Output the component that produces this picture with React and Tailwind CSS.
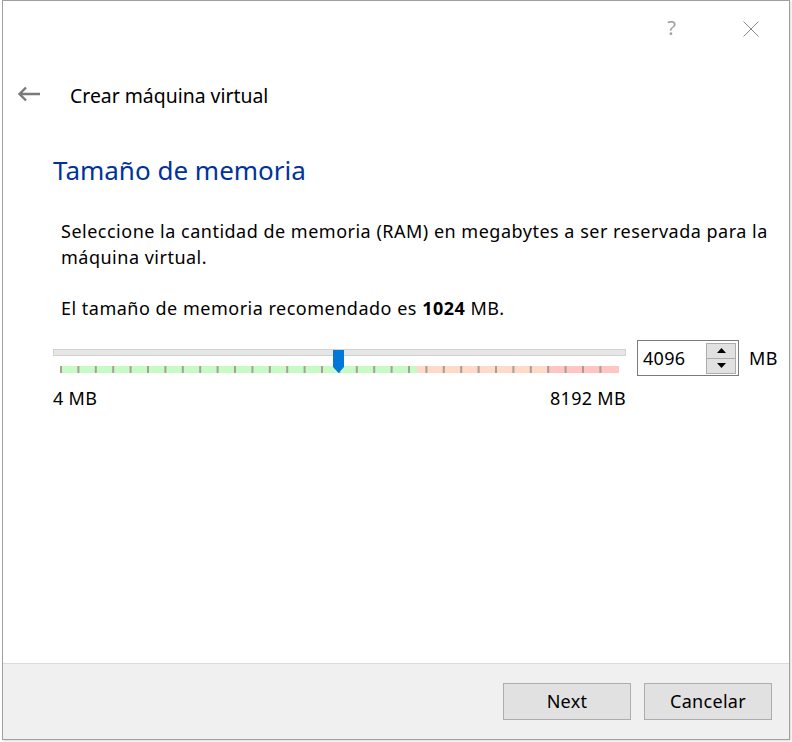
const TICKS = Array.from({ length: 32 }, (_, i) => 1 + i * 17.4);

function TickBar() {
  return (
    <svg width="559" height="7" className="block">
      <rect x="0" y="0" width="357" height="7" fill="#c6fbc6" />
      <rect x="357" y="0" width="130" height="7" fill="#ffdac8" />
      <rect x="487" y="0" width="72" height="7" fill="#ffc4c4" />
      {TICKS.map((x, i) => (
        <rect key={i} x={x - 1} y="0" width="2" height="7" fill="#a59f96" />
      ))}
    </svg>
  );
}

export default function App() {
  const font = "font-['Segoe_UI','Noto_Sans',sans-serif]";
  const txt = "text-[18px] tracking-[0.3px] text-black";
  const para = "text-[18px] tracking-[0.5px] text-black";

  return (
    <div className={`w-[792px] h-[742px] bg-white ${font}`}>
      <div className="ml-[2px] w-[788px] h-[740px] border border-[#a0a0a0] flex flex-col bg-white shadow-[1px_1px_2px_rgba(0,0,0,0.15)]">
        {/* title bar */}
        <div className="h-[56px] flex items-center justify-end pr-[30px] gap-[67px]">
          <span className="text-[20px] text-[#a0a0a0] leading-none mb-[2px]">?</span>
          <svg width="16" height="16" viewBox="0 0 16 16">
            <path d="M0.5 0.5 L15.5 15.5 M15.5 0.5 L0.5 15.5" stroke="#8a8a8a" strokeWidth="1" />
          </svg>
        </div>

        {/* header */}
        <div className="mt-[19px] h-[40px] flex items-center">
          <svg width="24" height="16" viewBox="0 0 24 16" className="ml-[14px] mb-[4px]">
            <path d="M23 8 H2.5 M9 1.5 L2.5 8 L9 14.5" stroke="#7a7a7a" strokeWidth="2.4" fill="none" />
          </svg>
          <span className="ml-[29px] text-[19.4px] text-black">Crear máquina virtual</span>
        </div>

        {/* content */}
        <div className="flex-1 pl-[50px]">
          <h1 className="mt-[37px] text-[26px] leading-[34px] text-[#00339a]">Tamaño de memoria</h1>

          <p className={`mt-[31px] ml-[8px] w-[715px] leading-[26px] ${para}`}>
            Seleccione la cantidad de memoria (RAM) en megabytes a ser reservada para la máquina virtual.
          </p>

          <p className={`mt-[25px] ml-[8px] leading-[26px] ${para}`}>
            El tamaño de memoria recomendado es <b>1024</b> MB.
          </p>

          <div className="mt-[19px] flex items-start">
            <div className="w-[573px]">
              <div className="relative h-[36px]">
                <div className="mt-[9px] h-[7px] bg-[#e6e6e6] border border-[#d2d2d2]"></div>
                <svg width="12" height="24" viewBox="0 0 12 24" className="absolute left-[280px] top-[1px]">
                  <path d="M0 0 H11 V17 L5.5 23 L0 17 Z" fill="#0078d7" />
                </svg>
                <div className="mt-[10px] ml-[7px]">
                  <TickBar />
                </div>
              </div>
              <div className={`flex justify-between leading-[26px] mt-[0px] ${txt}`}>
                <span>4 MB</span>
                <span>8192 MB</span>
              </div>
            </div>

            <div className="ml-[11px] w-[102px] h-[36px] border border-[#7a7a7a] flex items-center">
              <span className={`ml-[5px] flex-1 ${txt}`}>4096</span>
              <div className="mr-[2px] w-[30px] h-[31px] flex flex-col">
                <div className="h-[16px] bg-[#e1e1e1] border border-[#adadad] flex items-center justify-center">
                  <svg width="9" height="5" viewBox="0 0 9 5"><path d="M0 5 L4.5 0 L9 5 Z" fill="#000" /></svg>
                </div>
                <div className="h-[15px] bg-[#e1e1e1] border border-t-0 border-[#adadad] flex items-center justify-center">
                  <svg width="9" height="5" viewBox="0 0 9 5"><path d="M0 0 L4.5 5 L9 0 Z" fill="#000" /></svg>
                </div>
              </div>
            </div>
            <span className={`ml-[10px] h-[36px] flex items-center ${txt}`}>MB</span>
          </div>
        </div>

        {/* footer */}
        <div className="h-[76px] border-t border-[#dcdcdc] bg-[#f0f0f0] flex items-center justify-end gap-[13px] pr-[17px]">
          <button className={`w-[128px] h-[37px] bg-[#e1e1e1] border border-[#adadad] ${txt}`}>Next</button>
          <button className={`w-[128px] h-[37px] bg-[#e1e1e1] border border-[#adadad] ${txt}`}>Cancelar</button>
        </div>
      </div>
    </div>
  );
}
